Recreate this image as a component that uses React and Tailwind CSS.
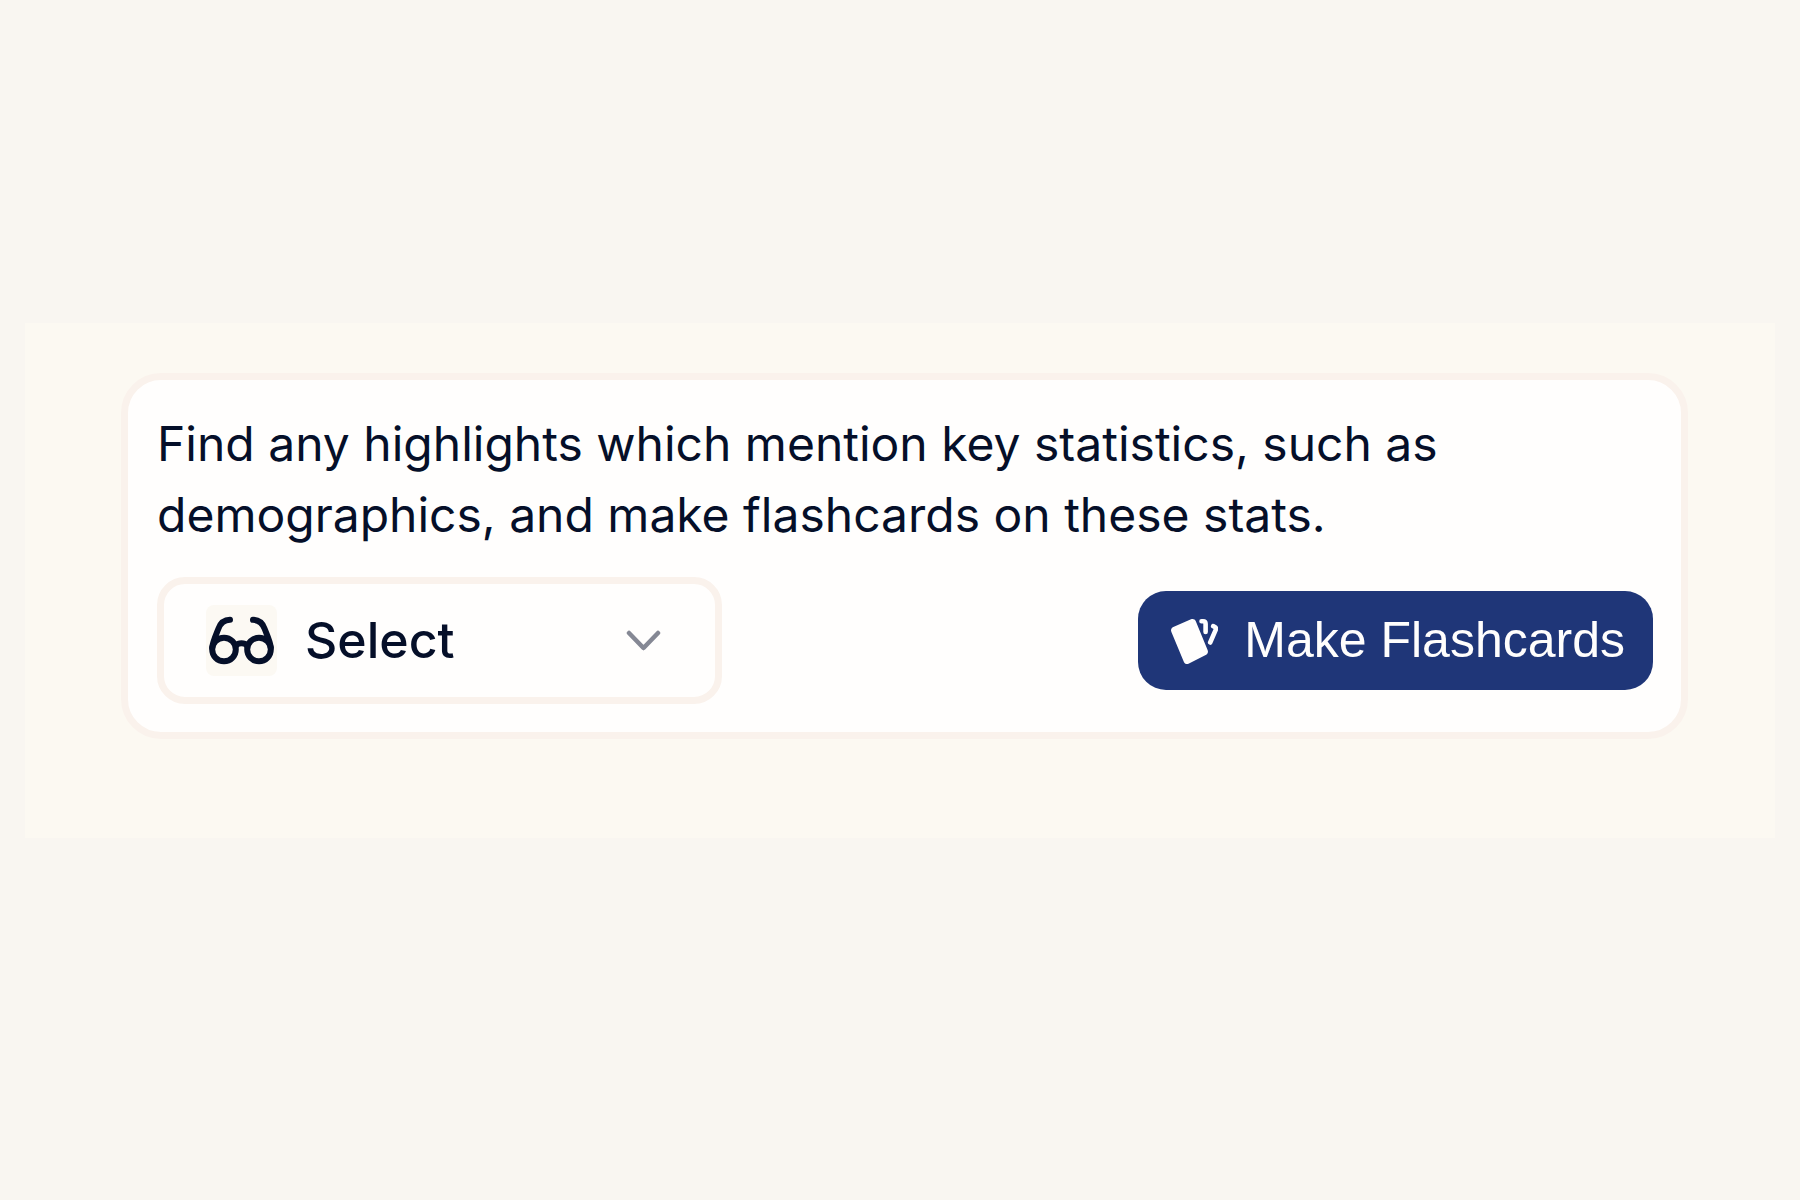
import { useState } from 'react';

const PROMPT =
  'Find any highlights which mention key statistics, such as demographics, and make flashcards on these stats.';

function GlassesIcon() {
  return (
    <svg className="w-[71px] h-[71px]" viewBox="0 0 71 71" fill="none" stroke="currentColor" strokeWidth="6" strokeLinecap="round" strokeLinejoin="round" aria-hidden="true">
      <circle cx="18" cy="44.500" r="11.800" />
      <circle cx="53" cy="44.500" r="11.800" />
      <path d="M30 40.500c2.500-3 8.500-3 11 0" />
      <path d="M6.200 42.500C7 36 10 30 12.500 23.500 14.500 18 17.500 15 24 14.800" />
      <path d="M64.800 42.500C64 36 61 30 58.500 23.500 56.500 18 53.500 15 47 14.800" />
    </svg>
  );
}

function CardsIcon() {
  return (
    <svg className="w-12 h-12" viewBox="0 0 48 48" fill="none" aria-hidden="true">
      <path d="M3.300 10L21 2.300c2-.8 4 0 4.800 1.900l11.900 29c.8 2-.1 3.900-2 4.700L18.500 46.800c-2 .8-3.900 0-4.700-2L1.300 14.700c-.8-2 .1-3.900 2-4.700z" fill="currentColor" />
      <path d="M31.500 4.200h1.500c1.700 0 2.600.9 2.600 2.600V15" stroke="currentColor" strokeWidth="4.600" strokeLinecap="round" strokeLinejoin="round" />
      <path d="M43.200 9.200l1.500.7c1.200.5 1.600 1.500 1.100 2.700L40.200 25.500" stroke="currentColor" strokeWidth="4.600" strokeLinecap="round" strokeLinejoin="round" />
    </svg>
  );
}

function ChevronIcon() {
  return (
    <svg className="w-9 h-6 flex-shrink-0" viewBox="0 0 36 24" fill="none" stroke="currentColor" strokeWidth="4.500" strokeLinecap="round" strokeLinejoin="round" aria-hidden="true">
      <path d="M4 4l14.500 15L33 4" />
    </svg>
  );
}

export default function App() {
  const [prompt, setPrompt] = useState(PROMPT);

  return (
    <main className="min-h-screen bg-[#f9f6f1] px-[25px] pt-[323px] font-['Inter','Liberation_Sans',sans-serif] text-[#050f29]">
      <section className="bg-[#fcf9f2] pt-[50px] pr-[87px] pb-[99px] pl-24">
        <form className="rounded-[40px] border-[7px] border-[#faf2ec] bg-[#fffefd] p-7 pl-[29px]" onSubmit={(e) => e.preventDefault()}>
          <textarea
            aria-label="Prompt"
            rows={2}
            value={prompt}
            onChange={(e) => setPrompt(e.target.value)}
            className="block w-full resize-none overflow-hidden bg-transparent text-[48px] leading-[71px] outline-none"
          />
          <div className="mt-[27px] flex items-center justify-between">
            <div className="flex w-[565px] items-center rounded-[28px] border-[7px] border-[#faf2ec] py-7 pr-[54px] pl-[42px]">
              <span className="-my-2 rounded-lg bg-[#fcf9f3]">
                <GlassesIcon />
              </span>
              <select aria-label="Reading source" className="ml-7 flex-1 appearance-none bg-transparent text-[50px] leading-[57px] font-medium outline-none">
                <option>Select</option>
              </select>
              <span className="pointer-events-none text-[#858894]">
                <ChevronIcon />
              </span>
            </div>
            <button type="submit" className="flex items-center gap-[26px] rounded-[28px] bg-[#1f3678] py-[14px] pr-7 pl-8 font-['Liberation_Sans',Arial,sans-serif] text-[50px] leading-[71px] text-[#fffefd]">
              <CardsIcon />
              Make Flashcards
            </button>
          </div>
        </form>
      </section>
    </main>
  );
}
